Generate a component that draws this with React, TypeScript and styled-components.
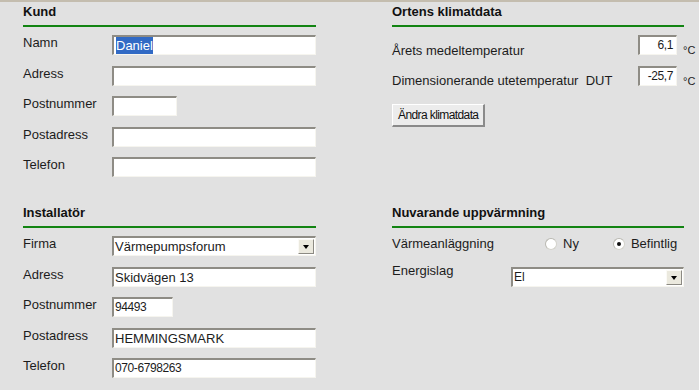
import React from 'react';
import styled, { createGlobalStyle } from 'styled-components';

const GlobalStyle = createGlobalStyle`
  html, body {
    margin: 0;
    padding: 0;
    background: #e1e1e1;
  }
  body {
    font-family: "Liberation Sans", Arial, sans-serif;
    font-size: 13px;
    color: #1c1c1c;
  }
`;

const Page = styled.div`
  width: 699px;
  height: 390px;
  box-sizing: border-box;
  border-top: 2px solid #c4bdaf;
  padding: 2px 15px 0 23px;
  display: grid;
  grid-template-columns: 293px 292px;
  grid-template-rows: 201px auto;
  column-gap: 76px;
  overflow: hidden;
`;

const Section = styled.section`
  display: flex;
  flex-direction: column;
`;

const Heading = styled.h2`
  margin: 0;
  padding-bottom: 5px;
  font-size: 13px;
  line-height: 16px;
  font-weight: bold;
  color: #111;
`;

const Rule = styled.div`
  height: 2px;
  background: #128412;
  margin-bottom: 8px;
`;

const Rows = styled.div`
  display: flex;
  flex-direction: column;
  gap: 10.5px;
`;

const Row = styled.div`
  display: flex;
  align-items: flex-start;
  height: 20px;
`;

const Label = styled.div<{ width?: number; offset?: number }>`
  width: ${({ width }) => (width ? `${width}px` : 'auto')};
  flex: ${({ width }) => (width ? '0 0 auto' : '1 1 auto')};
  padding-top: ${({ offset }) => offset ?? 0}px;
  line-height: 16px;
  white-space: pre;
`;

const Field = styled.div<{ width?: number; align?: 'left' | 'right'; narrow?: boolean }>`
  box-sizing: border-box;
  width: ${({ width }) => (width ? `${width}px` : 'auto')};
  flex: ${({ width }) => (width ? '0 0 auto' : '1 1 auto')};
  height: 20px;
  background: #fff;
  border-top: 2px solid #8e8c85;
  border-left: 2px solid #8e8c85;
  border-right: 1px solid #f6f5ef;
  border-bottom: 1px solid #f6f5ef;
  padding: 0 3px 0 1px;
  text-align: ${({ align }) => align ?? 'left'};
  font-size: ${({ narrow }) => (narrow ? '12px' : '13px')};
  letter-spacing: ${({ narrow }) => (narrow ? '-0.4px' : '0')};
  line-height: 17px;
  white-space: nowrap;
  overflow: hidden;
`;

const Selected = styled.span`
  background: #316ac5;
  color: #fff;
  padding: 1px 0;
  margin-left: 1px;
`;

const SelectBox = styled.div<{ width?: number }>`
  box-sizing: border-box;
  width: ${({ width }) => (width ? `${width}px` : 'auto')};
  flex: ${({ width }) => (width ? '0 0 auto' : '1 1 auto')};
  height: 20px;
  display: flex;
  background: #fff;
  border-top: 2px solid #8e8c85;
  border-left: 2px solid #8e8c85;
  border-right: 1px solid #f6f5ef;
  border-bottom: 1px solid #f6f5ef;
`;

const SelectValue = styled.div<{ small?: boolean }>`
  flex: 1;
  padding-left: 1px;
  font-size: ${({ small }) => (small ? '12px' : '13px')};
  line-height: 17px;
  white-space: nowrap;
`;

const SelectArrow = styled.div`
  box-sizing: border-box;
  width: 16px;
  margin: 1px 1px 1px 0;
  background: #ebe9de;
  border-top: 1px solid #fbfaf6;
  border-left: 1px solid #fbfaf6;
  border-right: 1px solid #8c8a83;
  border-bottom: 1px solid #8c8a83;
  display: flex;
  align-items: center;
  justify-content: center;

  &::after {
    content: '';
    width: 0;
    height: 0;
    border-left: 3.5px solid transparent;
    border-right: 3.5px solid transparent;
    border-top: 4px solid #000;
    margin-top: 1px;
  }
`;

const ClimateRow = styled.div<{ spaced?: boolean }>`
  display: flex;
  align-items: flex-start;
  height: 20px;
  margin-bottom: ${({ spaced }) => (spaced ? 11 : 0)}px;
`;

const Unit = styled.div`
  width: 1px;
  padding: 9px 0 0 6px;
  font-size: 11px;
  line-height: 12px;
  white-space: nowrap;
`;

const Button = styled.button`
  align-self: flex-start;
  margin-top: 18px;
  height: 23px;
  padding: 0 5px;
  background: #ececec;
  border-top: 1px solid #fff;
  border-left: 1px solid #fff;
  border-right: 2px solid #8a8a8a;
  border-bottom: 2px solid #8a8a8a;
  border-radius: 0;
  font-family: "Liberation Sans", Arial, sans-serif;
  font-size: 12px;
  letter-spacing: -0.6px;
  color: #111;
  cursor: pointer;
`;

const RadioRow = styled.div`
  display: flex;
  align-items: center;
  height: 16px;
  margin-bottom: 11px;
`;

const RadioOption = styled.label<{ gapAfter?: number }>`
  display: flex;
  align-items: center;
  gap: 6px;
  margin-right: ${({ gapAfter }) => gapAfter ?? 0}px;
  line-height: 16px;
`;

const RadioCircle = styled.span<{ checked?: boolean }>`
  box-sizing: border-box;
  width: 12px;
  height: 12px;
  border-radius: 50%;
  background: #fff;
  border: 1px solid #d3d2cb;
  border-top-color: #b9b8b1;
  border-left-color: #b9b8b1;
  display: flex;
  align-items: center;
  justify-content: center;

  &::after {
    content: '';
    width: 4px;
    height: 4px;
    border-radius: 50%;
    background: ${({ checked }) => (checked ? '#111' : 'transparent')};
  }
`;

const EnergyRow = styled.div`
  display: flex;
  align-items: flex-start;
`;

const EnergySelect = styled(SelectBox)`
  margin-top: 4px;
`;

function FormRow({ label, children }: { label: string; children: React.ReactNode }) {
  return (
    <Row>
      <Label width={89}>{label}</Label>
      {children}
    </Row>
  );
}

export default function App() {
  return (
    <>
      <GlobalStyle />
      <Page>
        <Section>
          <Heading>Kund</Heading>
          <Rule />
          <Rows>
            <FormRow label="Namn">
              <Field>
                <Selected>Daniel</Selected>
              </Field>
            </FormRow>
            <FormRow label="Adress">
              <Field />
            </FormRow>
            <FormRow label="Postnummer">
              <Field width={65} />
            </FormRow>
            <FormRow label="Postadress">
              <Field />
            </FormRow>
            <FormRow label="Telefon">
              <Field />
            </FormRow>
          </Rows>
        </Section>

        <Section>
          <Heading>Ortens klimatdata</Heading>
          <Rule />
          <ClimateRow spaced>
            <Label offset={8}>Årets medeltemperatur</Label>
            <Field width={39} align="right" narrow>
              6,1
            </Field>
            <Unit>°C</Unit>
          </ClimateRow>
          <ClimateRow>
            <Label offset={7}>{'Dimensionerande utetemperatur  DUT'}</Label>
            <Field width={39} align="right" narrow>
              -25,7
            </Field>
            <Unit>°C</Unit>
          </ClimateRow>
          <Button>Ändra klimatdata</Button>
        </Section>

        <Section>
          <Heading>Installatör</Heading>
          <Rule />
          <Rows>
            <FormRow label="Firma">
              <SelectBox>
                <SelectValue>Värmepumpsforum</SelectValue>
                <SelectArrow />
              </SelectBox>
            </FormRow>
            <FormRow label="Adress">
              <Field>Skidvägen 13</Field>
            </FormRow>
            <FormRow label="Postnummer">
              <Field width={61} narrow>
                94493
              </Field>
            </FormRow>
            <FormRow label="Postadress">
              <Field>HEMMINGSMARK</Field>
            </FormRow>
            <FormRow label="Telefon">
              <Field narrow>070-6798263</Field>
            </FormRow>
          </Rows>
        </Section>

        <Section>
          <Heading>Nuvarande uppvärmning</Heading>
          <Rule />
          <RadioRow>
            <Label width={153}>Värmeanläggning</Label>
            <RadioOption gapAfter={34}>
              <RadioCircle />
              Ny
            </RadioOption>
            <RadioOption>
              <RadioCircle checked />
              Befintlig
            </RadioOption>
          </RadioRow>
          <EnergyRow>
            <Label width={119}>Energislag</Label>
            <EnergySelect>
              <SelectValue small>El</SelectValue>
              <SelectArrow />
            </EnergySelect>
          </EnergyRow>
        </Section>
      </Page>
    </>
  );
}
